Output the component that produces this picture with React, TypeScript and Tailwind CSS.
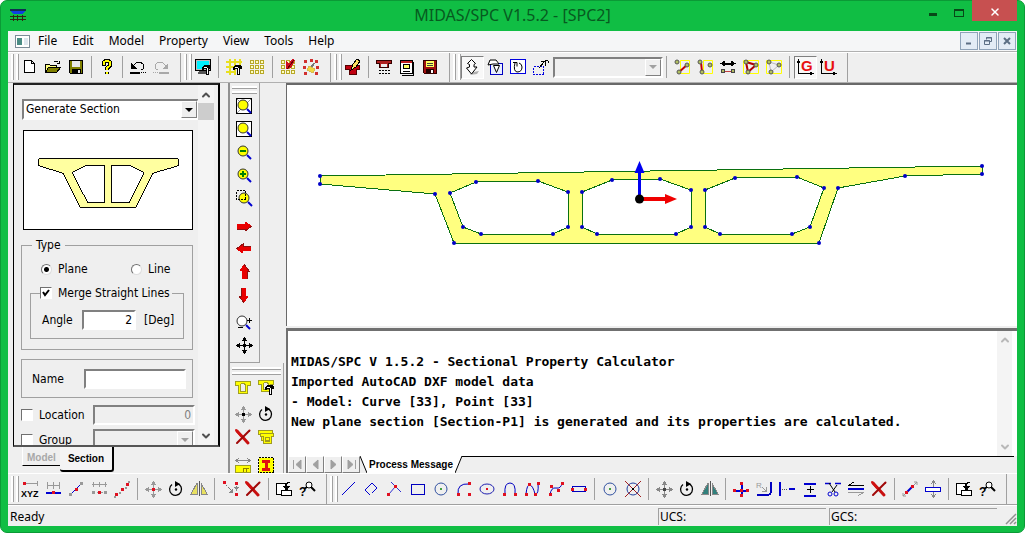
import React from 'react'
import { ChevronDown, ChevronUp, X } from 'lucide-react'

const RED_DOTS_3 = [[2, 13], [8, 8], [13, 3]]

// small parts shared by several icons
const Hammer = () => (
  <g>
    <path d="M7 11V8l2-2h5l2 2v2h-2v6h-3v-6H9v1z" fill="#000" />
    <path d="M12.500 9v6M9 8.500h3" stroke="#fff" />
  </g>
)

const SquareGrid = () => (
  <g fill="#ffffc0" stroke="#b8a828">
    {[1.5, 6.5, 11.5].map((y) => [1.5, 6.5, 11.5].map((x) => <rect key={`${x}-${y}`} x={x} y={y} width="3" height="3" />))}
  </g>
)

const Dots = ({ at, color = "#e01020" }: { at: number[][], color?: string }) => (
  <g fill={color}>
    {at.map(([x, y]) => <rect key={`${x}-${y}`} x={x - 1} y={y - 1} width="3" height="3" />)}
  </g>
)

const Nodes = ({ box, link }: { box: React.ReactNode, link: React.ReactNode }) => (
  <g shapeRendering="auto">
    {box}
    {link}
    {[[3, 3], [5, 13], [13, 6]].map(([x, y]) => (
      <circle key={x} cx={x} cy={y} r="2" fill="#b0c060" stroke="#555" />
    ))}
  </g>
)

const Cross = () => (
  <g shapeRendering="auto" strokeLinecap="round">
    <path d="M2 2L13 14" stroke="#c81010" strokeWidth="3" />
    <path d="M14.500 1.500L2 14" stroke="#a00808" strokeWidth="2" />
    <path d="M1 1l5 6" stroke="#d01010" strokeWidth="2" />
  </g>
)

const FourWay = ({ color, center }: { color: string, center: string }) => (
  <g>
    <path d="M8.500 2v13M2 8.500h13" stroke={color} />
    <path d="M8.500 0l3 4h-6zM8.500 17l3-4h-6zM0 8.500l4-3v6zM17 8.500l-4-3v6z" fill={color} />
    <rect x="7" y="7" width="3" height="3" fill={center} />
  </g>
)

const Magnifier = ({ mark, fill = "#ffff00" }: { mark?: React.ReactNode, fill?: string }) => (
  <g shapeRendering="auto">
    <path d="M11 11l4 4" stroke="#0000d0" strokeWidth="2" />
    <circle cx="7" cy="7" r="5" fill={fill} stroke="#333" />
    {mark}
  </g>
)

const Mirror = ({ fill }: { fill: string }) => (
  <g>
    <path d="M6 2v11H0z" fill={fill} stroke="#888" strokeWidth="1" />
    <path d="M10 2v11h6z" fill={fill} stroke="#888" strokeWidth="1" />
    <path d="M8.500 0v15" stroke="#555" />
  </g>
)

const Rotate = () => (
  <g shapeRendering="auto">
    <path d="M9 2.500a6 6 0 1 1-5 1" fill="none" stroke="#000" strokeWidth="1.300" />
    <path d="M7 0l5 3-5 3z" fill="#000" />
    <circle cx="8" cy="8.500" r="1.200" fill="#000" />
  </g>
)

const RedArrow = ({ angle }: { angle: number }) => (
  <g transform={`rotate(${angle} 8 8)`}>
    <path d="M1 6h8V3.500L16 8l-7 5v-2H1z" fill="#e80000" />
    <path d="M1 11h8v2l7-5" fill="none" stroke="#901010" />
  </g>
)

const icons: Record<string, React.ReactNode> = {
  "New": <path d="M2.500 1.500h7l3 3v9h-10zM9.500 1.500v3h3" fill="#fff" stroke="#000" />,
  "Open": (
    <g stroke="#000">
      <path d="M.500 13.500v-8h4l1 1h6v3" fill="#ffff80" />
      <path d="M.500 13.500l3-5h12l-4 5z" fill="#808000" />
      <path d="M8.500 3.500q3-3 5 0M14.500 1.500v3h-3" fill="none" />
    </g>
  ),
  "Save": (
    <g>
      <path d="M1.500 1.500h13v13h-12l-1-1z" fill="#808000" stroke="#000" />
      <path d="M4 2h8v6H4z" fill="#e8e8e8" />
      <path d="M4 10h9v4H4z" fill="#000" />
      <path d="M10 11h2v3h-2z" fill="#e8e8e8" />
    </g>
  ),
  "About": (
    <g fill="none">
      <path d="M4.500 7V5q0-3 3.500-3t3.500 3q0 2-3.500 4v2M8 12.500V15" stroke="#000" strokeWidth="4" />
      <path d="M4.500 6V5q0-3 3.500-3t3.500 3q0 2-3.500 4v1.500M8 12.500v2" stroke="#ffff00" strokeWidth="2" />
    </g>
  ),
  "Undo": (
    <g>
      <path d="M1 4v6h6z" fill="#000" />
      <path d="M3 8q2-5 6-5q5 1 5 5q0 2-3 3" fill="none" stroke="#000" />
      <path d="M0 13h10v2H0zM11 13h1v1h-1zM13 13h1v1h-1zM15 13h1v1h-1z" fill="#000" />
    </g>
  ),
  "Redo": (
    <g>
      <path d="M15 4v6H9z" fill="#a8a8a8" />
      <path d="M13 8q-2-5-6-5q-5 1-5 5q0 2 3 3" fill="none" stroke="#a8a8a8" />
      <path d="M6 13h10v2H6zM4 13h1v1H4zM2 13h1v1H2zM0 13h1v1H0z" fill="#a8a8a8" />
    </g>
  ),
  "Display": (
    <g>
      <path d="M.500.500h15v11H.500z" fill="#bbb" stroke="#000" />
      <path d="M2 2h12v8H2z" fill="#00f0ff" />
      <path d="M4 12h7v3H3z" fill="#555" />
      <Hammer />
    </g>
  ),
  "Grid Setting": (
    <g>
      <path d="M3.500 0v16M8.500 0v16M13.500 0v9M0 2.500h16M0 7.500h16M0 12.500h9" stroke="#e8e020" strokeWidth="2" />
      <Hammer />
    </g>
  ),
  "Grid": <SquareGrid />,
  "Snap Grid": (
    <g>
      <SquareGrid />
      <path d="M6 2l3 3 3-5 3 1-4 8-5 1z" fill="#d01020" />
      <path d="M7 10l7-9" stroke="#600" />
    </g>
  ),
  "Snap Point": (
    <g>
      <Dots at={[[2, 2], [8, 1], [13, 2], [1, 8], [2, 14], [14, 8], [13, 14]]} color="#d03030" />
      <path d="M11 4L8 9" stroke="#777" strokeWidth="2" />
      <path d="M6 7l6 3-2 4-6-3z" fill="#f0d840" stroke="#d8b850" />
    </g>
  ),
  "Draw Section": (
    <g>
      <path d="M0 6h14v4h-3v5H4v-5H0z" fill="#c00010" stroke="#500" />
      <path d="M6 11l2-6 4-5 3 2-4 6z" fill="#ffe060" stroke="#000" />
    </g>
  ),
  "Section Property": (
    <g>
      <path d="M.500 1.500h15v3h-3v4h-9v-4h-3z" fill="#b02020" stroke="#300" />
      <path d="M5 5h6v3H5z" fill="#eee" />
      <path d="M3 11.500h11M3 14.500h11" stroke="#000" strokeDasharray="2 1" />
    </g>
  ),
  "Report": (
    <g>
      <path d="M1.500 1.500h12v13h-12z" fill="#fff" stroke="#000" />
      <path d="M14 3v13H3" fill="none" stroke="#000" />
      <path d="M2 2h11v2H2z" fill="#c02020" />
      <path d="M4.500 5.500h6v4h-6z" fill="#ffff60" stroke="#000" />
      <path d="M4 12.500h7" stroke="#000" />
    </g>
  ),
  "Export": (
    <g>
      <path d="M1.500 1.500h13v13h-12l-1-1z" fill="#a01010" stroke="#300" />
      <path d="M4 2h8v6H4z" fill="#ffff60" />
      <path d="M5 4.500h6M5 6.500h6" stroke="#444" />
      <path d="M4 10h8v4H4z" fill="#200" />
      <path d="M9 11h2v3H9z" fill="#fff" />
    </g>
  ),
  "Select": (
    <g shapeRendering="auto">
      <path d="M9 13l6-1-2 3-7 1z" fill="#b0b0b0" />
      <path d="M7.500.500l4 4-1.500 1v2.500h3L7.500 15 2.500 9l3-1V5.500l-2-1z" fill="#fff" stroke="#000" />
    </g>
  ),
  "Select Polygon": (
    <g>
      <path d="M3.500 4.500h12v11h-12z" fill="#e8eeff" stroke="#0000c0" />
      <path d="M1 6l2-5h6l3 4-6 0z" fill="#fff" stroke="#000" shapeRendering="auto" />
      <path d="M6.500 6.500h6l-3 7z" fill="#fff" stroke="#000" shapeRendering="auto" />
    </g>
  ),
  "Select All": (
    <g>
      <path d="M.500.500h15v14H.500z" fill="#fff" stroke="#0000e0" />
      <path d="M5 4q-2 8 2 9q5 0 5-5q0-3-3-4M3 3.500h4v4" fill="none" stroke="#000" shapeRendering="auto" />
    </g>
  ),
  "Select Previous": (
    <g fill="none">
      <path d="M.500 7.500h10v8H.500z" stroke="#0000e0" strokeDasharray="2 1" />
      <path d="M6 9l5-6M8 2.500h4v4M12 2q3-2 4 2" stroke="#000" />
    </g>
  ),
  "Node To Curve": (
    <Nodes box={<path d="M6.500 1.500h9v13h-9z" fill="none" stroke="#ffff00" />} link={<path d="M5 13l8-7" stroke="#c00000" strokeWidth="2" />} />
  ),
  "Curve To Node": (
    <Nodes box={<path d="M6.500 1.500h9v13h-9z" fill="none" stroke="#ffff00" />} link={<path d="M4 3l1 10" stroke="#c00000" strokeWidth="2" />} />
  ),
  "Swap": (
    <g>
      <path d="M3 4.500h10" stroke="#000" strokeWidth="2" />
      <path d="M0 4.500l5-3v6zM16 4.500l-5-3v6z" fill="#000" />
      <path d="M4 12h8" stroke="#c04040" />
      <circle cx="3" cy="12" r="2" fill="#b0b860" stroke="#444" />
      <circle cx="13" cy="12" r="2" fill="#b0b860" stroke="#444" />
    </g>
  ),
  "Connect": (
    <Nodes box={<path d="M.500 1.500h15v13H.500z" fill="none" stroke="#ffff00" />} link={<path d="M3 3l2 10 8-7z" fill="none" stroke="#b00000" strokeWidth="2" />} />
  ),
  "Disconnect": (
    <Nodes box={<path d="M.500 1.500h15v13H.500z" fill="none" stroke="#ffff00" />} link={<path d="M3 3l2 10 8-7z" fill="none" stroke="#bbb" />} />
  ),
  "GCS": (
    <g>
      <path d="M1.500 15V1M1 14.500h15M0 4l1.500-3L3 4M13 13l3 1.500-3 1.500" fill="none" stroke="#000" />
      <text x="4" y="12" fontFamily="Liberation Sans, sans-serif" fontSize="15" fontWeight="700" fill="#e81010">G</text>
    </g>
  ),
  "UCS": (
    <g>
      <path d="M1.500 15V1M1 14.500h15M0 4l1.500-3L3 4M13 13l3 1.500-3 1.500" fill="none" stroke="#000" />
      <text x="4" y="12" fontFamily="Liberation Sans, sans-serif" fontSize="15" fontWeight="700" fill="#e81010">U</text>
    </g>
  ),

  // view tools
  "Zoom Fit": (
    <g>
      <path d="M.500.500h15v15H.500z" fill="#fff" stroke="#000" />
      <path d="M1 1l14 14M15 1L1 15" stroke="#999" />
      <Magnifier />
    </g>
  ),
  "Zoom Window": (
    <g>
      <path d="M.500.500h15v15H.500z" fill="#fff" stroke="#000" />
      <Magnifier />
    </g>
  ),
  "Zoom Out": <Magnifier mark={<path d="M4 7h6" stroke="#008000" strokeWidth="2" />} />,
  "Zoom In": <Magnifier mark={<path d="M4 7h6M7 4v6" stroke="#008000" strokeWidth="2" />} />,
  "Zoom Area": (
    <g>
      <g transform="translate(1 1)"><Magnifier /></g>
      <path d="M.500.500h9v9h-9z" fill="none" stroke="#000" strokeDasharray="2 1" />
    </g>
  ),
  "Pan Right": <RedArrow angle={0} />,
  "Pan Left": <RedArrow angle={180} />,
  "Pan Up": <RedArrow angle={270} />,
  "Pan Down": <RedArrow angle={90} />,
  "Dynamic Zoom": (
    <g>
      <g transform="translate(-1 0)"><Magnifier fill="#fff" /></g>
      <path d="M11 6.500h5M13.500 4v5M2 13.500h5" stroke="#000" />
    </g>
  ),
  "Dynamic Pan": <FourWay color="#000" center="#000" />,

  // section tools
  "Section": <path d="M.500 2.500h15v4h-3v8h-9v-8h-3zM5.500 6v6h5V6l-2-2h-2z" fill="#ffff00" fillRule="evenodd" stroke="#a0a020" />,
  "Modify Section": (
    <g>
      <path d="M.500 1.500h15v4h-3v7h-9v-7h-3zM5.500 5v5h5V5l-2-2h-2z" fill="#ffff00" fillRule="evenodd" stroke="#a0a020" />
      <Hammer />
    </g>
  ),
  "Copy Section": (
    <g fill="#ffff00" stroke="#a09a20">
      <path d="M.500 1.500h14v4h-2v6h-9v-6h-3z" />
      <path d="M2.500 4.500h13v3h-2v7h-8v-7h-3zM7.500 8.500h4v4h-4z" fillRule="evenodd" />
    </g>
  ),
  "Offset Section": (
    <g>
      <path d="M1 3.500h14M4 1L1 3.500 4 6M12 1l3 2.500L12 6" fill="none" stroke="#888" />
      <path d="M.500 8.500h15v7H.500z" fill="#ffff00" stroke="#a0a020" />
      <path d="M8 11.500h6M8.500 11v4M11.500 11v4" stroke="#908000" />
    </g>
  ),
  "I Section": (
    <g>
      <path d="M.500.500h15v15H.500z" fill="#ffff00" stroke="#000" strokeDasharray="2 1" />
      <path d="M4 3h8v3H9.500v5H12v3H4v-3h2.500V6H4z" fill="#e01010" />
    </g>
  ),
  "Move Section": <FourWay color="#999" center="#000" />,
  "Rotate": <Rotate />,
  "Delete": <Cross />,

  // point tools
  "Point XYZ": (
    <g>
      <path d="M3 2.500h13M15.500 0v5" stroke="#999" />
      <Dots at={[[2, 2]]} />
      <text x="-1" y="16" fontFamily="Liberation Sans, sans-serif" fontSize="9" fontWeight="700">XYZ</text>
    </g>
  ),
  "Point On Line": (
    <g>
      <path d="M2 4.500h13M2.500 1v7M8.500 1v7M14.500 1v7" stroke="#999" />
      <path d="M1 11.500h15" stroke="#0000d0" strokeWidth="2" />
      <Dots at={[[8, 11]]} />
    </g>
  ),
  "Divide": (
    <g shapeRendering="auto">
      <path d="M2 14L14 2" stroke="#0000d0" />
      <Dots at={[[2, 13], [13, 2]]} color="#999" />
      <Dots at={[[8, 8]]} />
    </g>
  ),
  "Project Point": (
    <g>
      <path d="M1 3.500h15M2.500 1v5M8.500 1v5M14.500 1v5" stroke="#999" />
      <path d="M2 11.500h13" stroke="#999" strokeDasharray="2 2" />
      <Dots at={[[2, 11], [14, 11]]} color="#999" />
      <Dots at={[[8, 11]]} />
    </g>
  ),
  "Points": (
    <g>
      <Dots at={RED_DOTS_3} />
      <g fill="#999"><path d="M0 15h2v2H0zM5 11h2v2H5zM11 6h2v2h-2zM14 0h2v2h-2z" /></g>
    </g>
  ),
  "Move Point": <FourWay color="#999" center="#e01020" />,
  "Mirror Point": <Mirror fill="#e8e060" />,
  "Merge Point": (
    <g>
      <Dots at={[[2, 1], [14, 2], [14, 13]]} />
      <path d="M4 4l6 6M14.500 5v6" stroke="#777" strokeDasharray="2 1" />
      <path d="M11 7v5H6zM12 6h5l-2.500 4z" fill="#888" />
    </g>
  ),
  "Translate": (
    <g>
      <path d="M.500 2.500h9v11h-9z" fill="#fff" stroke="#000" strokeWidth="1.500" />
      <path d="M5.500 9.500h10v5h-10z" fill="#fff" stroke="#000" />
      <path d="M14 1q-4 0-4 5" fill="none" stroke="#000" />
      <path d="M7 5h7l-3.500 5z" fill="#000" />
    </g>
  ),
  "Query": (
    <g shapeRendering="auto">
      <circle cx="10" cy="4" r="3" fill="#fff" stroke="#000" />
      <path d="M12 6l4 4M8 6l-3 2" stroke="#000" strokeWidth="2" />
      <text x="0" y="15" fontFamily="Liberation Sans, sans-serif" fontSize="12" fontWeight="700">?</text>
    </g>
  ),

  // curve tools
  "Line": <path d="M1 14L14 1" stroke="#0000d0" shapeRendering="auto" />,
  "Polyline": <path d="M6 14L1 9l7-7 5 5-5 5" fill="none" stroke="#0000d0" shapeRendering="auto" />,
  "Tangent Line": (
    <g>
      <path d="M4 1l10 10M8 6l-6 7" stroke="#3030d0" shapeRendering="auto" />
      <Dots at={[[8, 5], [1, 13]]} />
    </g>
  ),
  "Rectangle": <path d="M1.500 3.500h13v10h-13z" fill="none" stroke="#0000c0" strokeWidth="1.500" />,
  "Circle": (
    <g shapeRendering="auto">
      <circle cx="8" cy="8" r="6" fill="none" stroke="#3050a0" />
      <rect x="7" y="7" width="2" height="2" fill="#40a040" />
    </g>
  ),
  "Arc": (
    <g>
      <path d="M2 13Q1 2 13 3" fill="none" stroke="#0000c0" shapeRendering="auto" />
      <Dots at={[[2, 13], [13, 2], [13, 13]]} />
    </g>
  ),
  "Ellipse": (
    <g shapeRendering="auto">
      <ellipse cx="8" cy="8" rx="7" ry="5" fill="none" stroke="#2020b0" />
      <rect x="7" y="7" width="2" height="2" fill="#e01020" />
    </g>
  ),
  "Parabola": (
    <g>
      <path d="M3 13Q2 2 8 2t5 11" fill="none" stroke="#0000c0" shapeRendering="auto" />
      <Dots at={[[2, 13], [13, 13]]} />
    </g>
  ),
  "Spline": (
    <g>
      <path d="M1 13Q2 3 5 4t5 9q4 1 3-11" fill="none" stroke="#0000c0" shapeRendering="auto" />
      <Dots at={[[1, 13], [4, 3], [10, 13], [13, 2]]} />
    </g>
  ),
  "Curve": (
    <g>
      <path d="M2 14q1-8 6-7t6-5" fill="none" stroke="#0000c0" shapeRendering="auto" />
      <Dots at={[[2, 13], [3, 5], [10, 9], [14, 2]]} />
    </g>
  ),
  "Plate": (
    <g>
      <path d="M1.500 5.500h13v5h-13z" fill="none" stroke="#0000c0" />
      <Dots at={[[1, 8], [14, 8]]} />
    </g>
  ),
  "Delete Circle": (
    <g shapeRendering="auto">
      <circle cx="8" cy="8" r="6" fill="none" stroke="#2040a0" />
      <path d="M0 0l16 16M16 0L0 16" stroke="#a02020" />
      <rect x="7" y="7" width="2" height="2" fill="#000" />
    </g>
  ),
  "Move Curve": <FourWay color="#888" center="#444" />,
  "Mirror Curve": <Mirror fill="#30807c" />,
  "Intersect": (
    <g>
      <path d="M8.500 2v13M1 9.500h15" stroke="#0000d0" strokeWidth="2" />
      <Dots at={[[8, 2], [8, 9], [8, 14], [1, 9], [14, 9]]} />
    </g>
  ),
  "Fillet": (
    <g fill="none">
      <path d="M15 1v9q0 4-4 4H1" stroke="#0000c0" strokeWidth="1.500" />
      <path d="M6 6l4 4M10.500 6v4.500H6" stroke="#999" />
      <text x="0" y="7" fontFamily="Liberation Sans, sans-serif" fontSize="8" fill="#999">R</text>
    </g>
  ),
  "Extend": (
    <g>
      <path d="M1 1v14M10 8h6" stroke="#0000d0" strokeWidth="2" />
      <path d="M3 8h6" stroke="#555" strokeDasharray="1 1" />
    </g>
  ),
  "Offset": (
    <g>
      <path d="M2 2.500h12M2 14.500h12" stroke="#0000d0" strokeWidth="2" />
      <path d="M5 8.500h7M8.500 5v7" stroke="#000" />
    </g>
  ),
  "Trim": (
    <g fill="none" shapeRendering="auto">
      <path d="M0 2.500h6M10 2.500h6" stroke="#0000d0" strokeWidth="1.500" />
      <path d="M4 2l6 9M12 4l-5 7" stroke="#000" />
      <circle cx="5" cy="13" r="2" stroke="#0000d0" />
      <circle cx="11" cy="13" r="2" stroke="#0000d0" />
    </g>
  ),
  "Parallel": (
    <g>
      <path d="M0 4.500h16M6 1L1 4" stroke="#000" />
      <path d="M0 8h16" stroke="#0000d0" strokeWidth="2" />
      <path d="M0 11.500h16l-6 3" fill="none" stroke="#999" />
    </g>
  ),
  "Scale Line": (
    <g shapeRendering="auto">
      <path d="M1 15L15 1M12 1h3v3M1 12v3h3" fill="none" stroke="#999" />
      <path d="M5 11l6-6" stroke="#0000d0" strokeWidth="2" />
      <Dots at={[[4, 11], [10, 5]]} />
    </g>
  ),
  "Scale Plate": (
    <g>
      <path d="M8.500 0v6M8.500 11v6M6 3l2.500-3L11 3M6 13l2.500 3 2.500-3" fill="none" stroke="#888" />
      <path d="M.500 6.500h15v4H.500z" fill="#fff" stroke="#0000d0" />
    </g>
  ),
}

const MAIN_BANDS = [
  ["New", "Open", "Save", "|", "About", "|", "Undo", "Redo"],
  ["Display", "|", "Grid Setting", "Grid", "|", "Snap Grid", "Snap Point"],
  ["Draw Section", "|", "Section Property", "Report", "Export"],
  ["Select", "Select Polygon", "Select All", "Select Previous", "combo", "|", "Node To Curve", "Curve To Node", "Swap", "Connect", "Disconnect", "|", "GCS", "UCS"],
]

const EDIT_BANDS = [
  ["Point XYZ", "Point On Line", "Divide", "Project Point", "Points", "|", "Move Point", "Rotate", "Mirror Point", "|", "Merge Point", "Delete", "|", "Translate", "Query"],
  ["Line", "Polyline", "Tangent Line", "Rectangle", "Circle", "Arc", "Ellipse", "Parabola", "Spline", "Curve", "Plate", "|", "Circle", "Delete Circle", "|",
    "Move Curve", "Rotate", "Mirror Curve", "|", "Intersect", "Fillet", "Extend", "Offset", "Trim", "Parallel", "Delete", "|", "Scale Line", "Scale Plate", "|", "Translate", "Query"],
]

const PRESSED = ["Select", "GCS"]

const ToolButton = ({ name }: { name: string }) => (
  <button
    type="button"
    aria-label={name}
    className={`flex h-[23px] w-[23px] shrink-0 items-center justify-center pr-px ${PRESSED.includes(name) ? "border border-t-[#808080] border-l-[#808080] border-r-white border-b-white bg-[#f8f8f8]" : ""}`}
  >
    <svg viewBox="0 0 16 16" className="h-4 w-4 shrink-0 overflow-visible" shapeRendering="crispEdges">{icons[name]}</svg>
  </button>
)

const Band = ({ items }: { items: string[] }) => (
  <div className="flex shrink-0 items-center border-r border-[#a0a0a0] pr-[7px] pb-px">
    <div className="flex h-[26px] w-[11px] shrink-0 items-center gap-[2px] pl-[3px]">
      <div className="h-full w-[3px] border-r border-[#a0a0a0] bg-white" />
      <div className="h-full w-[3px] border-r border-[#a0a0a0] bg-white" />
    </div>
    {items.map((item, i) => {
      if (item === "|") return <div key={i} className="mr-1 ml-[3px] h-[22px] w-px shrink-0 bg-[#a0a0a0]" />
      if (item === "combo") return <DropDown key={i} label="Named selection" options={[]} width="w-[110px]" disabled />
      return <ToolButton key={i} name={item} />
    })}
  </div>
)

type DropDownProps = { label: string, options: string[], width: string, disabled?: boolean }

const DropDown = ({ label, options, width, disabled = false }: DropDownProps) => (
  <div className={`relative h-[21px] shrink-0 border-2 border-t-[#808080] border-l-[#808080] border-r-white border-b-white ${width} ${disabled ? "bg-[#efefef]" : "bg-white"}`}>
    <select aria-label={label} disabled={disabled} className="block h-full w-full appearance-none bg-transparent pl-[2px] text-[12px] leading-[17px] outline-none">
      {options.map((o) => <option key={o}>{o}</option>)}
    </select>
    <span className="pointer-events-none absolute top-0 right-0 flex h-full w-4 items-center justify-center border border-t-white border-l-white border-r-[#808080] border-b-[#808080] bg-[#efefef]">
      <svg viewBox="0 0 8 4" className={`h-1 w-2 ${disabled ? "fill-[#a0a0a0]" : "fill-black"}`}><path d="M0 0h8L4 4z" /></svg>
    </span>
  </div>
)

const TitleBar = () => (
  <header className="grid h-[31px] shrink-0 grid-cols-[1fr_auto_1fr]">
    <svg viewBox="0 0 16 16" className="mt-2 ml-[2px] h-4 w-4" shapeRendering="crispEdges">
      <path d="M0 1h16v2H0z" fill="#103050" />
      <path d="M1 3h14l-2 3H3z" fill="#1040e0" />
      <path d="M0 8.500h16M0 11.500h16M3.500 7v6M7.500 7v6M12.500 7v6" stroke="#302810" />
    </svg>
    <h1 className="font-[Noto_Sans,sans-serif] text-[16px] leading-[31px] text-[#075a20]">MIDAS/SPC V1.5.2 - [SPC2]</h1>
    <div className="flex items-start justify-end">
      <button type="button" aria-label="Minimize" className="flex h-5 w-[26px] items-center justify-center pt-2">
        <span className="h-[3px] w-2 bg-[#084818]" />
      </button>
      <button type="button" aria-label="Maximize" className="flex h-5 w-[26px] items-center justify-center pt-[5px]">
        <span className="h-2 w-[10px] border border-t-2 border-[#084818]" />
      </button>
      <button type="button" aria-label="Close" className="flex h-[21px] w-[45px] items-center justify-center bg-[#c75050] pt-[2px]">
        <X className="h-3 w-3 text-white" strokeWidth={3} />
      </button>
    </div>
  </header>
)

const MdiButton = ({ label, children }: { label: string, children: React.ReactNode }) => (
  <button type="button" aria-label={label} className="flex h-[18px] w-[18px] items-center justify-center border border-[#8fa3b8] bg-[#e3ecf5]">
    <svg viewBox="0 0 10 10" className="h-[10px] w-[10px]" fill="none" stroke="#5c6f84">{children}</svg>
  </button>
)

const MenuBar = () => (
  <nav className="flex h-[21px] shrink-0 items-center border-b border-[#b0b0b0] bg-[#f5f6f7] pr-px">
    <svg viewBox="0 0 16 13" className="ml-[7px] h-[13px] w-4" shapeRendering="crispEdges">
      <path d="M.500.500h14v12H.500z" fill="#fff" stroke="#7c8c98" />
      <path d="M2 3h5v7H2z" fill="#4a8c84" />
      <path d="M9 3h4v7H9z" fill="#dde6ee" />
    </svg>
    <div className="flex gap-px">
      {["File", "Edit", "Model", "Property", "View", "Tools", "Help"].map((m) => (
        <button key={m} type="button" className="px-[7px] font-[Noto_Sans,sans-serif] text-[12px] leading-5">{m}</button>
      ))}
    </div>
    <div className="ml-auto flex gap-px">
      <MdiButton label="Minimize document"><path d="M2 7.500h5" strokeWidth="2" /></MdiButton>
      <MdiButton label="Restore document"><path d="M3.500 3.500v-2h5v4h-2M1.500 4.500h5v4h-5zM1 5h6M3 2h6" /></MdiButton>
      <MdiButton label="Close document"><path d="M2 2l6 6M8 2L2 8" strokeWidth="2" /></MdiButton>
    </div>
  </nav>
)

const sunken = "border-2 border-t-[#808080] border-l-[#808080] border-r-white border-b-white"
const check = "h-3 w-3 shrink-0 appearance-none border border-t-[#707070] border-l-[#707070] border-r-white border-b-white bg-white"

const CheckMark = () => (
  <svg viewBox="0 0 8 8" className="pointer-events-none absolute top-1 left-[2px] h-2 w-2"><path d="M1 3l2 3 4-5" fill="none" stroke="#000" strokeWidth="2" /></svg>
)

const SectionPreview = () => (
  <svg viewBox="23 129 170 100" className="ml-[9px] block h-[100px] w-[170px] border border-black bg-white" shapeRendering="crispEdges">
    <g fill="#ffffa0" stroke="#000">
      <path d="M37.500 157.500H179.500V164.500L154 172L136 207.500H80L62 172L37.500 164.500z" />
      <path d="M71.500 171.500L85 164.500H104.500V201.500H87z" fill="#fff" />
      <path d="M111.500 164.500H131L145 171.500L130 201.500H111.500z" fill="#fff" />
    </g>
  </svg>
)

const SectionPanel = () => (
  <aside className="flex w-[212px] shrink-0 flex-col">
    <div className="ml-[5px] flex min-h-0 flex-1 overflow-hidden border-t-2 border-r-2 border-b-2 border-l border-t-[#222] border-r-black border-b-[#555] border-l-black font-[DejaVu_Sans_Condensed,DejaVu_Sans,sans-serif] text-[12px] leading-4">
      <div className="flex min-w-0 flex-1 flex-col overflow-hidden pt-[14px]">
        <div className="ml-2"><DropDown label="Generate" options={["Generate Section", "Generate Line"]} width="w-[177px]" /></div>
        <div className="mt-[10px]"><SectionPreview /></div>

        <fieldset className="mt-[7px] ml-[7px] w-[172px] shrink-0 border border-[#a0a0a0] px-2 pb-[10px]">
          <legend className="ml-[2px] px-1">Type</legend>
          <div className="mt-2 flex items-center pl-[11px]">
            <label className="flex w-[90px] items-center gap-[6px]">
              <input type="radio" name="type" defaultChecked className="h-[11px] w-[11px] appearance-none rounded-full border border-t-[#707070] border-l-[#707070] border-r-[#ddd] border-b-[#ddd] bg-[radial-gradient(circle,#000_2px,#fff_3px)]" />
              Plane
            </label>
            <label className="flex items-center gap-[6px]">
              <input type="radio" name="type" className="h-[11px] w-[11px] appearance-none rounded-full border border-t-[#707070] border-l-[#707070] border-r-[#ddd] border-b-[#ddd] bg-white" />
              Line
            </label>
          </div>
          <fieldset className="mt-2 border border-[#a0a0a0] pb-2">
            <legend className="ml-[9px] pr-[2px]">
              <label className="relative flex items-center gap-[6px]">
                <input type="checkbox" defaultChecked className={check} />
                <CheckMark />
                Merge Straight Lines
              </label>
            </legend>
            <div className="mt-[9px] flex items-center pl-[11px]">
              <label htmlFor="angle" className="w-10">Angle</label>
              <input id="angle" type="text" defaultValue="2" className={`h-5 w-[54px] bg-white pr-[2px] text-right ${sunken}`} />
              <span className="ml-2">[Deg]</span>
            </div>
          </fieldset>
        </fieldset>

        <div className="mt-[9px] ml-[7px] flex h-[39px] w-[172px] shrink-0 items-center border border-[#a0a0a0] pl-[10px]">
          <label htmlFor="name" className="w-[52px]">Name</label>
          <input id="name" type="text" className={`h-5 w-[102px] bg-white px-1 ${sunken}`} />
        </div>

        <div className="mt-[7px] ml-[7px] flex shrink-0 items-center">
          <label className="flex w-[72px] items-center gap-[6px]"><input type="checkbox" className={check} />Location</label>
          <input type="text" aria-label="Location value" disabled defaultValue="0" className={`h-5 w-[102px] bg-[#efefef] pr-[2px] text-right text-[#808080] ${sunken}`} />
        </div>
        <div className="mt-1 ml-[7px] flex shrink-0 items-center">
          <label className="flex w-[72px] items-center gap-[6px]"><input type="checkbox" className={check} />Group</label>
          <DropDown label="Group name" options={[]} width="w-[102px]" disabled />
        </div>
      </div>

      {/* scroll bar */}
      <div className="mr-1 flex w-4 shrink-0 flex-col items-center bg-[#f4f4f4] text-[#505050]">
        <ChevronUp className="mt-1 mb-[2px] h-3 w-3 shrink-0" strokeWidth={4} />
        <div className="h-[17px] w-full shrink-0 bg-[#cdcdcd]" />
        <ChevronDown className="mt-auto mb-[3px] h-3 w-3 shrink-0" strokeWidth={4} />
      </div>
    </div>

    {/* panel tabs */}
    <div className="flex h-[26px] shrink-0 items-start pl-[14px] font-[Liberation_Sans,sans-serif] text-[10px] font-bold">
      <button type="button" className="h-[19px] border-b border-l border-b-black border-l-white px-1 leading-[22px] text-[#a8a8a8]">Model</button>
      <button type="button" className="h-[25px] rounded-b-[3px] border-r-2 border-b-2 border-black bg-[#f4f4f4] px-2 leading-[24px]">Section</button>
    </div>
  </aside>
)

const Grip = () => (
  <div className="mx-[2px] mt-[3px] flex h-2 shrink-0 flex-col gap-[2px]">
    <div className="h-[3px] border-b border-[#a0a0a0] bg-white" />
    <div className="h-[3px] border-b border-[#a0a0a0] bg-white" />
  </div>
)

const SideTools = () => (
  <div className="flex w-[58px] shrink-0 flex-col overflow-hidden border-l-2 border-[#909090]">
    <div className="flex w-[30px] shrink-0 flex-col items-center border-r border-b border-[#a0a0a0] pb-[6px]">
      <div className="w-full"><Grip /></div>
      <div className="flex flex-col items-center">
        {["Zoom Fit", "Zoom Window", "Zoom Out", "Zoom In", "Zoom Area"].map((n) => <ToolButton key={n} name={n} />)}
      </div>
      <div className="mt-[5px] flex flex-col items-center">
        {["Pan Right", "Pan Left", "Pan Up", "Pan Down"].map((n) => <ToolButton key={n} name={n} />)}
      </div>
      <div className="mt-1 flex flex-col items-center">
        {["Dynamic Zoom", "Dynamic Pan"].map((n) => <ToolButton key={n} name={n} />)}
      </div>
    </div>
    <div className="flex min-h-0 w-[54px] flex-1 flex-col overflow-hidden border-r border-[#a0a0a0] pt-px">
      <Grip />
      <div className="flex shrink-0 pl-[2px]"><ToolButton name="Section" /><ToolButton name="Modify Section" /></div>
      <div className="mt-1 grid shrink-0 grid-cols-[23px_23px] pl-[2px]">
        <ToolButton name="Move Section" /><ToolButton name="Rotate" />
        <ToolButton name="Delete" /><ToolButton name="Copy Section" />
      </div>
      <div className="mt-[5px] flex shrink-0 pl-[2px]"><ToolButton name="Offset Section" /><ToolButton name="I Section" /></div>
    </div>
  </div>
)

const OUTLINE = [[320, 176], [320, 184], [435, 194], [454, 243], [819, 243], [838, 188], [905, 176], [982, 174], [982, 166]]
const CELLS = [
  [[450, 193], [476, 182], [538, 181], [568, 192], [568, 227], [553, 234], [481, 234], [463, 227]],
  [[582, 192], [612, 180], [660, 179], [691, 190], [691, 227], [676, 234], [597, 234], [582, 227]],
  [[705, 190], [735, 178], [797, 177], [824, 188], [810, 227], [792, 234], [720, 234], [705, 227]],
]

const toPoints = (pts: number[][]) => pts.map(([x, y]) => `${x},${y}`).join(" ")

const ModelView = () => (
  <div className="min-h-0 flex-1 border-t-2 border-l border-[#696969] bg-white">
    <svg viewBox="287 85 730 241" className="block h-full w-full">
      <g stroke="#0a7010" shapeRendering="crispEdges">
        <polygon points={toPoints(OUTLINE)} fill="#ffff80" />
        {CELLS.map((c, i) => <polygon key={i} points={toPoints(c)} fill="#fff" />)}
      </g>
      {[OUTLINE, ...CELLS].flat().map(([x, y]) => <circle key={`${x}-${y}`} cx={x} cy={y} r="2" fill="#0000c8" />)}
      <path d="M639.500 199V170" stroke="#0000f0" strokeWidth="3" />
      <path d="M634.500 173L639.500 161L644.500 173z" fill="#0000f0" />
      <path d="M640 199H666" stroke="#f00000" strokeWidth="4" />
      <path d="M665 194L677 199L665 204z" fill="#f00000" />
      <circle cx="639.500" cy="199" r="4.500" fill="#000" />
    </svg>
  </div>
)

const SCROLL_SHAPES = [
  ["First", "M1.500 1v9M9 1v9L4 5.500z"],
  ["Previous", "M8 1v9L3 5.500z"],
  ["Next", "M3 1v9l5-4.500z"],
  ["Last", "M2 1v9l5-4.500zM9.500 1v9"],
]

const MESSAGES = [
  "MIDAS/SPC V 1.5.2 - Sectional Property Calculator",
  "Imported AutoCAD DXF model data",
  "- Model: Curve [33], Point [33]",
  "New plane section [Section-P1] is generated and its properties are calculated.",
]

const MessagePane = () => (
  <div className="flex h-[145px] shrink-0 flex-col border-t-[3px] border-l-2 border-[#707070]">
    <div className="flex min-h-0 flex-1 bg-white">
      <div className="min-w-0 flex-1 overflow-hidden pt-[21px] pl-[3px] font-[DejaVu_Sans_Mono,monospace] text-[13px] leading-5 font-bold whitespace-pre">
        {MESSAGES.map((m) => <p key={m}>{m}</p>)}
      </div>
      <div className="mr-[5px] flex w-[15px] shrink-0 flex-col items-center justify-between bg-[#f4f4f4] py-[3px] text-[#b8b8b8]">
        <ChevronUp className="h-3 w-3" strokeWidth={4} />
        <ChevronDown className="h-3 w-3" strokeWidth={4} />
      </div>
    </div>
    <div className="flex h-[17px] shrink-0">
      {SCROLL_SHAPES.map(([label, d]) => (
        <button key={label} type="button" aria-label={label} className="flex h-[17px] w-[18px] items-center justify-center border border-t-white border-l-white border-r-[#808080] border-b-[#808080]">
          <svg viewBox="0 0 11 11" className="h-[11px] w-[11px]" fill="#a0a0a0" stroke="#a0a0a0"><path d={d} /></svg>
        </button>
      ))}
      <svg viewBox="0 0 7 17" className="h-[17px] w-[7px]"><path d="M0 0h7v17z" fill="#fff" /><path d="M0 0l7 17" stroke="#000" /></svg>
      <button type="button" className="bg-white px-[2px] font-[Liberation_Sans,sans-serif] text-[10px] leading-[18px] font-bold">Process Message</button>
      <svg viewBox="0 0 7 17" className="h-[17px] w-[7px]"><path d="M0 0h7L0 17z" fill="#fff" /><path d="M0 17L7 0" stroke="#000" /></svg>
      <div className="mr-[3px] flex-1 border-t border-black" />
    </div>
  </div>
)

const StatusBar = () => (
  <footer className="flex h-[21px] shrink-0 items-center border-t border-white pt-px font-[Noto_Sans,sans-serif] text-[12px] leading-4">
    <span className="flex-1 pl-[2px]">Ready</span>
    <span className="mr-[3px] h-[17px] w-[168px] border-t border-l border-[#a0a0a0] pl-px">UCS:</span>
    <span className="h-[17px] w-[168px] border-t border-l border-[#a0a0a0] pl-px">GCS:</span>
    <svg viewBox="0 0 20 17" className="h-[17px] w-5"><path d="M9 16L19 6M13 16l6-6M17 16l2-2" stroke="#909090" strokeWidth="1.500" /></svg>
  </footer>
)

const App = () => {
  return (
    <div className="h-screen min-h-[480px] w-full overflow-hidden bg-white text-black">
      <div className="flex h-full flex-col rounded-[7px] border border-[#0b9a36] bg-[#10be44] px-[7px] pb-[6px]">
        <div className="-mt-px flex min-h-0 flex-1 flex-col">
          <TitleBar />
          <main className="flex min-h-0 flex-1 flex-col bg-[#efefef]">
            <MenuBar />
            <div className="flex h-[31px] shrink-0 overflow-hidden border-t border-b border-t-white border-b-[#b0b0b0]">
              {MAIN_BANDS.map((b, i) => <Band key={i} items={b} />)}
            </div>
            <div className="flex min-h-0 flex-1">
              <SectionPanel />
              <div className="w-2 shrink-0" />
              <SideTools />
              <div className="flex min-w-0 flex-1 flex-col">
                <ModelView />
                <div className="h-[2px] shrink-0" />
                <MessagePane />
              </div>
            </div>
            <div className="flex h-8 shrink-0 overflow-hidden border-t border-b border-t-white border-b-[#a0a0a0]">
              {EDIT_BANDS.map((b, i) => <Band key={i} items={b} />)}
            </div>
            <StatusBar />
          </main>
        </div>
      </div>
    </div>
  )
}

export default App
